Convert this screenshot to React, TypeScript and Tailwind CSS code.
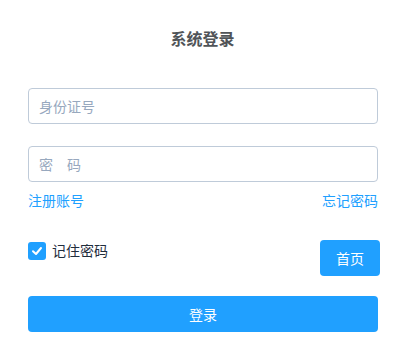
export default function App() {
  return (
    <div
      className="w-[411px] h-[352px] bg-white px-[28px] pt-[26px]"
      style={{ fontFamily: '"Noto Sans CJK SC", "Noto Sans", sans-serif' }}
    >
      {/* Title */}
      <h3 className="text-center text-[16px] leading-[24px] font-bold text-[#505458] pr-[6px]">
        系统登录
      </h3>

      {/* Inputs */}
      <div className="mt-[38px]">
        <input
          type="text"
          placeholder="身份证号"
          className="w-[350px] h-[36px] px-[10px] border border-[#bfcbd9] rounded-[4px] text-[14px] text-[#1f2d3d] placeholder:text-[#97a8be] outline-none"
        />
      </div>
      <div className="mt-[22px]">
        <input
          type="password"
          placeholder="密　码"
          className="w-[350px] h-[36px] px-[10px] border border-[#bfcbd9] rounded-[4px] text-[14px] text-[#1f2d3d] placeholder:text-[#97a8be] outline-none"
        />
      </div>

      {/* Links */}
      <div className="w-[350px] flex justify-between mt-[8px] text-[14px] leading-[20px] text-[#20a0ff]">
        <a href="#">注册账号</a>
        <a href="#">忘记密码</a>
      </div>

      {/* Remember + home */}
      <div className="w-[352px] flex justify-between items-start mt-[30px]">
        <label className="flex items-center gap-[6px] text-[14px] text-[#1f2d3d]">
          <span className="w-[18px] h-[18px] rounded-[3px] bg-[#20a0ff] flex items-center justify-center">
            <svg width="12" height="12" viewBox="0 0 12 12" fill="none">
              <path d="M2 6.2 L5 9 L10 3" stroke="white" strokeWidth="2" strokeLinecap="round" strokeLinejoin="round" />
            </svg>
          </span>
          记住密码
        </label>
        <button className="w-[60px] h-[36px] rounded-[4px] bg-[#20a0ff] text-white text-[14px]">
          首页
        </button>
      </div>

      {/* Submit */}
      <button className="mt-[20px] w-[350px] h-[36px] rounded-[4px] bg-[#20a0ff] text-white text-[14px]">
        登录
      </button>
    </div>
  );
}
